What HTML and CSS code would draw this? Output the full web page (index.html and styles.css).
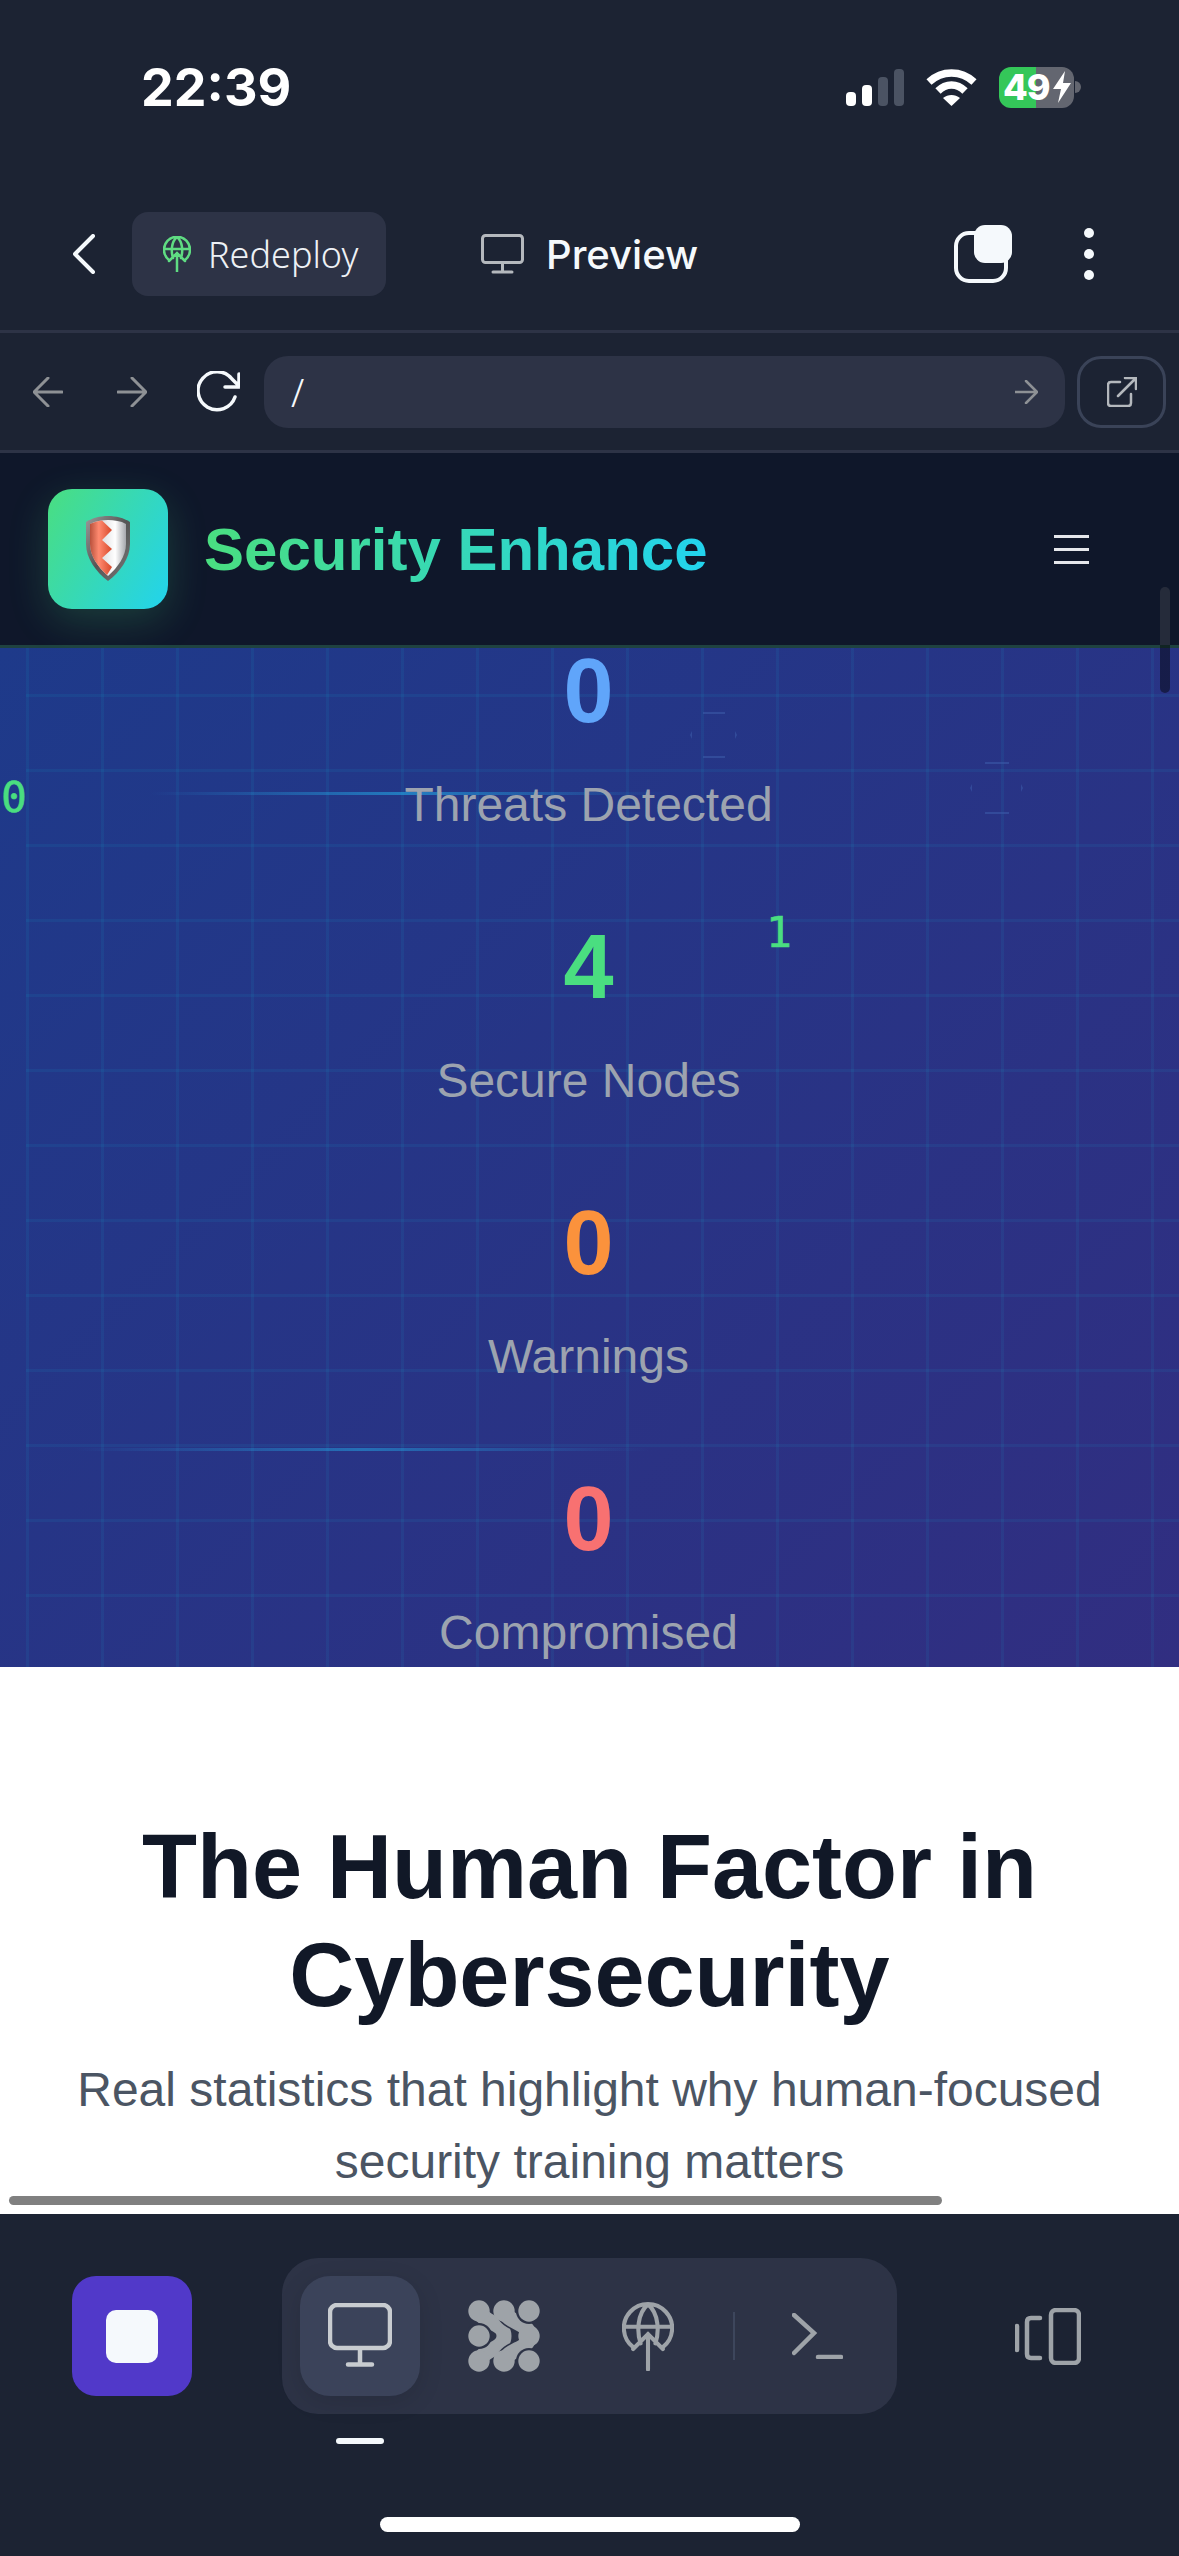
FILE: index.html
```html
<!DOCTYPE html>
<html>
<head>
	<title>Security Enhance</title>
	<link rel="stylesheet" href="styles.css">
</head>
<body>
<div class="phone">
	<!-- status bar -->
	<div class="status">
		<span class="time">22:39</span>
		<div class="status-icons">
			<svg class="signal" width="58" height="37" viewBox="0 0 58 37">
				<rect x="0" y="23" width="10" height="14" rx="4" fill="#fff"/>
				<rect x="16" y="16" width="10" height="21" rx="4" fill="#fff"/>
				<rect x="32" y="8" width="10" height="29" rx="4" fill="#4b5363"/>
				<rect x="48" y="0" width="10" height="37" rx="4" fill="#4b5363"/>
			</svg>
			<svg class="wifi" width="51" height="37" viewBox="0 0 51 37">
				<path d="M3 13 C16 1 35 1 48 13" fill="none" stroke="#fff" stroke-width="7.5"/>
				<path d="M12 22 C20 14 31 14 39 22" fill="none" stroke="#fff" stroke-width="7.5"/>
				<path d="M25.500 37 L17 29 C22 25 29 25 34 29 Z" fill="#fff"/>
			</svg>
			<div class="battery">
				<span class="battery-level">49</span>
				<svg class="bolt" width="18" height="32" viewBox="0 0 18 32"><path d="M12 0 L0 18 H8 L5 32 L18 12 H10 Z" fill="#fff"/></svg>
			</div>
			<span class="battery-nub"></span>
		</div>
	</div>

	<!-- top bar -->
	<div class="topbar">
		<svg class="back" width="22" height="40" viewBox="0 0 22 40"><path d="M20 2 L2 20 L20 38" fill="none" stroke="#f5f9fc" stroke-width="4" stroke-linecap="round" stroke-linejoin="round"/></svg>
		<div class="redeploy">
			<svg width="28" height="36" viewBox="0 0 28 36" class="globe-green">
				<path d="M6 24 A13 13 0 1 1 22 24 M1 13 H27 M14 1 C8 6 8 16 10 22 M14 1 C20 6 20 16 18 22 M14 36 V17 M6 25 L14 17 L22 25"/>
			</svg>
			<span>Redeploy</span>
		</div>
		<div class="preview">
			<svg width="43" height="40" viewBox="0 0 43 40" class="line-grey">
				<rect x="1.500" y="1.500" width="40" height="27" rx="3"/>
				<path d="M21.500 29 V37 M12 38 H31"/>
			</svg>
			<span>Preview</span>
		</div>
		<svg class="tabs-icon" width="58" height="58" viewBox="0 0 58 58">
			<rect x="2" y="8" width="50" height="48" rx="13" fill="none" stroke="#f5f9fc" stroke-width="4"/>
			<rect x="20" y="0" width="38" height="38" rx="11" fill="#f5f9fc"/>
		</svg>
		<div class="dots"><i></i><i></i><i></i></div>
	</div>

	<!-- browser nav -->
	<div class="nav">
		<svg class="nav-back" width="30" height="30" viewBox="0 0 30 30"><path d="M29 15 H2 M15 1 L1 15 L15 29"/></svg>
		<svg class="nav-forward" width="30" height="30" viewBox="0 0 30 30"><path d="M1 15 H28 M15 1 L29 15 L15 29"/></svg>
		<svg class="nav-reload" width="43" height="41" viewBox="0 0 43 41"><path d="M38 26 A19 19 0 1 1 35 8 L42 15 M42 3 V16 H28"/></svg>
		<div class="url">
			<span>/</span>
			<svg width="23" height="24" viewBox="0 0 23 24"><path d="M0 12 H21 M11 1 L22 12 L11 23"/></svg>
		</div>
		<div class="open-btn">
			<svg width="30" height="30" viewBox="0 0 30 30"><path d="M13 5 H4 Q1 5 1 8 V26 Q1 29 4 29 H21 Q24 29 24 26 V17 M11 19 L29 1 M18 1 H29 V12"/></svg>
		</div>
	</div>

	<!-- site header -->
	<div class="site-header">
		<div class="logo">
			<svg width="44" height="65" viewBox="0 0 44 65">
				<defs>
					<linearGradient id="metal" x1="0" y1="0" x2="1" y2="1">
						<stop offset="0" stop-color="#9a9a9a"/>
						<stop offset=".5" stop-color="#555"/>
						<stop offset="1" stop-color="#7a7a7a"/>
					</linearGradient>
					<linearGradient id="red" x1="0" y1="0" x2="1" y2="0">
						<stop offset="0" stop-color="#b9513c"/>
						<stop offset=".4" stop-color="#ff8a70"/>
						<stop offset="1" stop-color="#d8482a"/>
					</linearGradient>
					<linearGradient id="silver" x1="0" y1="0" x2="1" y2="0">
						<stop offset="0" stop-color="#bfc0c4"/>
						<stop offset=".7" stop-color="#fff"/>
						<stop offset="1" stop-color="#a5a7ac"/>
					</linearGradient>
				</defs>
				<path d="M22 0 C30 0 38 2 44 6 V28 C44 42 34 56 22 65 C10 56 0 42 0 28 V6 C6 2 14 0 22 0 Z" fill="url(#metal)"/>
				<path d="M22 4 C28 4 35 5 40 8 V28 C40 40 32 51 22 60 C12 51 4 40 4 28 V8 C9 5 16 4 22 4 Z" fill="url(#silver)"/>
				<path d="M16 4.500 L26 14 L16 24 L26 33 L16 42 L26 51 L21 59 C12 51 4 40 4 28 V8 C8 6 12 5 16 4.500 Z" fill="url(#red)"/>
			</svg>
		</div>
		<span class="brand">Security Enhance</span>
		<div class="burger"><i></i><i></i><i></i></div>
	</div>

	<!-- hero stats -->
	<div class="hero">
		<div class="grid-layer"></div>
		<div class="scan scan-one"></div>
		<div class="scan scan-two"></div>
		<span class="bit bit-zero">0</span>
		<span class="bit bit-one">1</span>
		<svg class="hex hex-one" width="47" height="46" viewBox="0 0 47 46"><path d="M13 0 H35 V2 H13 Z M13 44 H35 V46 H13 Z M2 19 L0 23 L2 27 Z M45 19 L47 23 L45 27 Z"/></svg>
		<svg class="hex hex-two" width="53" height="52" viewBox="0 0 53 52"><path d="M15 0 H39 V2 H15 Z M15 50 H39 V52 H15 Z M2 22 L0 26 L2 30 Z M51 22 L53 26 L51 30 Z"/></svg>
		<div class="stats">
			<div class="stat"><div class="num num-blue">0</div><div class="label">Threats Detected</div></div>
			<div class="stat"><div class="num num-green">4</div><div class="label">Secure Nodes</div></div>
			<div class="stat"><div class="num num-orange">0</div><div class="label">Warnings</div></div>
			<div class="stat"><div class="num num-red">0</div><div class="label">Compromised</div></div>
		</div>
	</div>

	<!-- white section -->
	<div class="human">
		<h2>The Human Factor in Cybersecurity</h2>
		<p>Real statistics that highlight why human-focused security training matters</p>
		<span class="hscroll"></span>
	</div>

	<!-- bottom toolbar -->
	<div class="bottom">
		<div class="toolbar">
			<div class="stop"><i></i></div>
			<div class="pill">
				<div class="pill-item active">
					<svg width="64" height="66" viewBox="0 0 64 66" class="tool-light">
						<rect x="2" y="2" width="60" height="43" rx="7"/>
						<path d="M32 46 V60 M20 61.500 H44"/>
					</svg>
					<span class="marker"></span>
				</div>
				<div class="pill-item">
					<svg width="72" height="72" viewBox="0 0 72 72" class="mesh">
						<path class="band" d="M11 11 C16 24 36 22 36 36 C36 50 16 48 11 61"/>
						<circle class="ring" cx="11" cy="36" r="13"/>
						<circle cx="11" cy="36" r="10.700"/>
						<circle cx="11" cy="11" r="10.700"/>
						<circle cx="11" cy="61" r="10.700"/>
						<path class="casing" d="M36 11 C41 24 61 22 61 36 C61 50 41 48 36 61"/>
						<path class="band" d="M36 11 C41 24 61 22 61 36 C61 50 41 48 36 61"/>
						<circle cx="36" cy="11" r="10.700"/>
						<circle cx="36" cy="61" r="10.700"/>
						<circle cx="61" cy="36" r="10.700"/>
						<circle class="ring" cx="61" cy="11" r="13"/>
						<circle class="ring" cx="61" cy="61" r="13"/>
						<circle cx="61" cy="11" r="10.700"/>
						<circle cx="61" cy="61" r="10.700"/>
					</svg>
				</div>
				<div class="pill-item">
					<svg width="52" height="70" viewBox="0 0 28 36" class="globe-grey">
						<path d="M6 24 A13 13 0 1 1 22 24 M1 13 H27 M14 1 C8 6 8 16 10 22 M14 1 C20 6 20 16 18 22 M14 36 V17 M6 25 L14 17 L22 25"/>
					</svg>
				</div>
				<span class="pill-sep"></span>
				<div class="pill-item">
					<svg width="51" height="46" viewBox="0 0 51 46" class="tool-grey"><path d="M2 2 L22 20 L2 40 M26 44 H49"/></svg>
				</div>
			</div>
			<svg class="responsive" width="66" height="57" viewBox="0 0 66 57">
				<g class="tool-grey">
					<path d="M2 18 V42 M25 10 H16 Q12 10 12 14 V46 Q12 50 16 50 H25"/>
					<rect x="36" y="2" width="28" height="53" rx="5"/>
				</g>
			</svg>
		</div>
		<span class="home-bar"></span>
	</div>

	<span class="vscroll"></span>
</div>
</body>
</html>
```

FILE: styles.css
```css
* {
	box-sizing: border-box;
}
body {
	margin: 0;
	background: #1c2333;
	font-family: "Liberation Sans", Arial, sans-serif;
}
.phone {
	position: relative;
	display: flex;
	flex-direction: column;
	width: 1179px;
	height: 2556px;
	overflow: hidden;
	background: #1c2333;
}

/* status bar */
.status {
	display: flex;
	align-items: center;
	flex: none;
	height: 174px;
	padding: 0 98px 0 141px;
}
.time {
	font-family: Inter, sans-serif;
	font-size: 52px;
	font-weight: 700;
	color: #fff;
}
.status-icons {
	display: flex;
	align-items: center;
	margin-left: auto;
}
.wifi {
	margin-left: 22px;
}
.battery {
	display: flex;
	align-items: center;
	width: 75px;
	height: 41px;
	margin-left: 22px;
	padding-left: 4px;
	border-radius: 12px;
	background: linear-gradient(90deg, #34c759 49%, #636670 49%);
}
.battery-level {
	font-family: Inter, sans-serif;
	font-size: 36px;
	font-weight: 800;
	line-height: 41px;
	letter-spacing: -1px;
	color: #fff;
}
.bolt {
	margin-left: 3px;
}
.battery-nub {
	width: 6px;
	height: 12px;
	margin-left: 1px;
	border-radius: 0 6px 6px 0;
	background: #636670;
}

/* top bar */
.topbar {
	display: flex;
	align-items: center;
	flex: none;
	height: 156px;
	padding: 4px 85px 0 73px;
}
.redeploy {
	display: flex;
	align-items: center;
	width: 254px;
	height: 84px;
	margin-left: 37px;
	padding-left: 31px;
	border-radius: 16px;
	background: #2d3346;
	font-family: "Noto Sans", sans-serif;
	font-size: 36px;
	font-weight: 300;
	color: #eef1f5;
}
.redeploy span {
	margin-left: 17px;
}
.globe-green path {
	fill: none;
	stroke: #5fdc82;
	stroke-width: 2.500;
	stroke-linecap: round;
}
.preview {
	display: flex;
	align-items: center;
	margin-left: 95px;
	font-family: Inter, sans-serif;
	font-size: 40px;
	font-weight: 500;
	color: #f5f9fc;
}
.preview span {
	margin-left: 22px;
}
.line-grey rect,
.line-grey path {
	fill: none;
	stroke: #b4b8bd;
	stroke-width: 3;
	stroke-linecap: round;
}
.tabs-icon {
	margin-left: auto;
}
.dots {
	display: flex;
	flex-direction: column;
	gap: 11px;
	margin-left: 72px;
}
.dots i {
	display: block;
	width: 10px;
	height: 10px;
	border-radius: 50%;
	background: #f5f9fc;
}

/* browser nav */
.nav {
	display: flex;
	align-items: center;
	flex: none;
	height: 123px;
	padding: 0 13px 0 33px;
	border-top: 3px solid #2d3346;
	border-bottom: 3px solid #2d3346;
}
.nav svg path {
	fill: none;
	stroke-linecap: round;
	stroke-linejoin: round;
}
.nav-back path,
.nav-forward path {
	stroke: #8e9195;
	stroke-width: 3;
}
.nav-forward {
	margin-left: 54px;
}
.nav-reload {
	margin-left: 50px;
}
.nav-reload path {
	stroke: #f5f9fc;
	stroke-width: 3.500;
}
.url {
	display: flex;
	align-items: center;
	justify-content: space-between;
	flex: 1;
	height: 72px;
	margin-left: 24px;
	padding: 0 27px 0 27px;
	border-radius: 24px;
	background: #2d3346;
	font-family: "Noto Sans", sans-serif;
	font-size: 38px;
	font-weight: 300;
	color: #f5f9fc;
}
.url path {
	stroke: #8e9195;
	stroke-width: 2.500;
}
.open-btn {
	display: flex;
	align-items: center;
	justify-content: center;
	width: 89px;
	height: 72px;
	margin-left: 12px;
	border: 3px solid #3a4358;
	border-radius: 24px;
}
.open-btn path {
	stroke: #b4b8bd;
	stroke-width: 2.500;
}

/* site header */
.site-header {
	display: flex;
	align-items: center;
	flex: none;
	height: 195px;
	padding: 0 90px 0 48px;
	border-bottom: 3px solid #1f4240;
	background: #0f172a;
}
.logo {
	display: flex;
	align-items: center;
	justify-content: center;
	width: 120px;
	height: 120px;
	border-radius: 24px;
	background: linear-gradient(120deg, #4ade80, #22d3ee);
	box-shadow: 0 12px 40px rgba(74, 222, 128, 0.2);
}
.logo svg {
	margin-top: -1px;
}
.brand {
	margin-left: 36px;
	font-size: 60px;
	font-weight: 700;
	background: linear-gradient(90deg, #4ade80, #22d3ee);
	-webkit-background-clip: text;
	background-clip: text;
	color: transparent;
}
.burger {
	display: flex;
	flex-direction: column;
	gap: 10px;
	margin-left: auto;
}
.burger i {
	display: block;
	width: 35px;
	height: 3px;
	background: #e5e7eb;
}

/* hero stats */
.hero {
	position: relative;
	display: flex;
	flex-direction: column;
	flex: none;
	height: 1019px;
	overflow: hidden;
	background: linear-gradient(135deg, #1e3a8a, #312e81);
}
.grid-layer {
	position: absolute;
	top: -29px;
	left: 26px;
	right: -80px;
	bottom: -80px;
	background-image:
		linear-gradient(rgba(0, 255, 255, 0.055) 3px, transparent 3px),
		linear-gradient(90deg, rgba(0, 255, 255, 0.055) 3px, transparent 3px);
	background-size: 75px 75px;
}
.scan {
	position: absolute;
	height: 3px;
}
.scan-one {
	top: 144px;
	left: 150px;
	width: 520px;
	background: linear-gradient(90deg, transparent, rgba(34, 170, 230, 0.6), transparent);
}
.scan-two {
	top: 800px;
	left: 75px;
	width: 575px;
	background: linear-gradient(90deg, transparent, rgba(34, 170, 230, 0.5), transparent);
}
.bit {
	position: absolute;
	font-family: "DejaVu Sans Mono", monospace;
	font-size: 43px;
	line-height: 48px;
	color: #4ade80;
	-webkit-text-stroke: 0.6px #4ade80;
}
.bit-zero {
	top: 125px;
	left: 1px;
}
.bit-one {
	top: 260px;
	left: 766px;
}
.hex {
	position: absolute;
	fill: #3b5aa8;
	opacity: 0.6;
}
.hex-one {
	top: 64px;
	left: 690px;
}
.hex-two {
	top: 114px;
	left: 970px;
}
.stats {
	position: relative;
	display: flex;
	flex-direction: column;
	gap: 72px;
	padding-right: 2px;
	text-align: center;
}
.num {
	font-size: 90px;
	font-weight: 700;
	line-height: 108px;
	margin-bottom: 24px;
}
/* the list is scrolled, the first number sits right under the header */
.stat:first-child .num {
	line-height: 86px;
	margin-bottom: 35px;
}
.num-blue { color: #60a5fa; }
.num-green { color: #4ade80; }
.num-orange { color: #fb923c; }
.num-red { color: #f87171; }
.label {
	font-size: 48px;
	line-height: 72px;
	color: #9ca3af;
}
.vscroll {
	position: absolute;
	top: 587px;
	right: 9px;
	width: 10px;
	height: 106px;
	border-radius: 5px;
	background: linear-gradient(#252b3a 58px, rgba(0, 0, 0, 0.45) 58px);
}

/* white section */
.human {
	position: relative;
	flex: none;
	height: 547px;
	overflow: hidden;
	padding: 146px 48px 0;
	background: #fff;
	text-align: center;
}
.human h2 {
	margin: 0 0 25px;
	font-size: 90px;
	font-weight: 700;
	line-height: 108px;
	color: #111827;
}
.human p {
	margin: 0;
	font-size: 48px;
	line-height: 72px;
	color: #4b5563;
}
.hscroll {
	position: absolute;
	left: 9px;
	bottom: 9px;
	width: 933px;
	height: 9px;
	border-radius: 5px;
	background: #808080;
}

/* bottom toolbar */
.bottom {
	position: relative;
	flex: 1;
	background: #1c2333;
}
.toolbar {
	display: flex;
	align-items: center;
	height: 156px;
	margin-top: 44px;
	padding-left: 72px;
}
.stop {
	display: flex;
	align-items: center;
	justify-content: center;
	width: 120px;
	height: 120px;
	border-radius: 24px;
	background: #5139c9;
}
.stop i {
	display: block;
	width: 52px;
	height: 53px;
	border-radius: 10px;
	background: #f5f9fc;
}
.pill {
	display: flex;
	align-items: center;
	width: 615px;
	height: 156px;
	margin-left: 90px;
	padding-left: 18px;
	border-radius: 36px;
	background: #2d3346;
}
.pill-item {
	position: relative;
	display: flex;
	align-items: center;
	justify-content: center;
	flex: none;
	width: 120px;
	height: 120px;
	margin-right: 24px;
	border-radius: 30px;
}
.pill-item:nth-child(3) {
	margin-right: 0;
}
.pill-item.active {
	background: #3b435a;
	box-shadow: 0 6px 24px rgba(0, 0, 0, 0.12);
}
.pill-item:last-child {
	margin-left: 22px;
	margin-right: 0;
}
.pill-sep {
	width: 2px;
	height: 48px;
	margin-left: 25px;
	background: #3d465c;
}
.tool-light rect,
.tool-light path {
	fill: none;
	stroke: #c8ccd0;
	stroke-width: 4.500;
	stroke-linecap: round;
}
.mesh circle {
	fill: #9ea3a8;
}
.mesh .ring {
	fill: #2d3346;
}
.mesh .band,
.mesh .casing {
	fill: none;
}
.mesh .band {
	stroke: #9ea3a8;
	stroke-width: 15;
}
.mesh .casing {
	stroke: #2d3346;
	stroke-width: 18;
}
.globe-grey path {
	fill: none;
	stroke: #9ea3a8;
	stroke-width: 2.200;
	stroke-linecap: round;
}
.tool-grey path,
.tool-grey rect {
	fill: none;
	stroke: #9ea3a8;
	stroke-width: 4.500;
	stroke-linecap: round;
}
.marker {
	position: absolute;
	left: 36px;
	bottom: -48px;
	width: 48px;
	height: 6px;
	border-radius: 3px;
	background: #f5f9fc;
}
.responsive {
	margin-left: 118px;
}
.home-bar {
	position: absolute;
	left: 380px;
	bottom: 24px;
	width: 420px;
	height: 15px;
	border-radius: 8px;
	background: #fff;
}
```
